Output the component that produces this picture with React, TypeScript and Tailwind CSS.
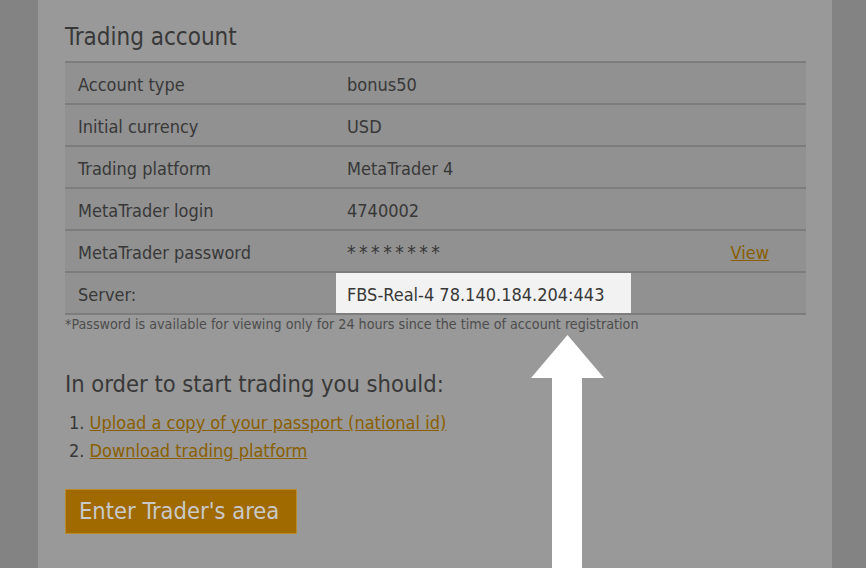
const rows = [
  { label: 'Account type', value: 'bonus50' },
  { label: 'Initial currency', value: 'USD' },
  { label: 'Trading platform', value: 'MetaTrader 4' },
  { label: 'MetaTrader login', value: '4740002' },
  { label: 'MetaTrader password', value: '********', link: 'View', stars: true },
];

export default function App() {
  return (
    <div
      className="relative flex h-[568px] w-[866px] overflow-hidden bg-[#838383] text-[#383838]"
      style={{ fontFamily: '"DejaVu Sans Condensed", "DejaVu Sans", sans-serif' }}
    >
      <div className="w-[38px] shrink-0" />
      <div className="flex-1 bg-[#999999] pl-[27px] pr-[26px] pt-[22px]">
        <h2 className="text-[24px] leading-[30px]">Trading account</h2>
        <div className="mt-[9px] border-t-2 border-[#7d7d7d]">
          {rows.map((r) => (
            <div key={r.label} className="flex h-[42px] items-center border-b-2 border-[#7d7d7d] bg-[#919191] pt-[2px] text-[18px]">
              <div className="w-[271px] pl-[13px]">{r.label}</div>
              <div className={r.stars ? 'flex-1 pl-[11px] text-[19px] tracking-[3.5px]' : 'flex-1 pl-[11px]'}>{r.value}</div>
              {r.link && <a className="mr-[37px] text-[#8a5f00] underline">{r.link}</a>}
            </div>
          ))}
          <div className="flex h-[42px] items-stretch border-b-2 border-[#7d7d7d] bg-[#919191] text-[18px]">
            <div className="flex w-[271px] items-center pl-[13px] pt-[2px]">Server:</div>
            <div className="flex w-[295px] items-center bg-[#f2f2f2] pl-[11px] pt-[2px]">FBS-Real-4 78.140.184.204:443</div>
          </div>
        </div>
        <p className="text-[14.2px] leading-[18px] text-[#4d4d4d]">
          *Password is available for viewing only for 24 hours since the time of account registration
        </p>
        <h3 className="mt-[36px] text-[23.5px] leading-[30px]">In order to start trading you should:</h3>
        <ol className="mt-[11px] flex flex-col gap-[2px] pl-[4px] text-[18px] leading-[26px]">
          <li>
            1. <a className="text-[#8a5f00] underline">Upload a copy of your passport (national id)</a>
          </li>
          <li>
            2. <a className="text-[#8a5f00] underline">Download trading platform</a>
          </li>
        </ol>
        <button className="mt-[25px] h-[45px] w-[232px] border border-[#b98a2e] bg-[#a06a00] px-[13px] text-left text-[23.5px] text-[#c9c9c9]">
          Enter Trader's area
        </button>
      </div>
      <div className="w-[34px] shrink-0" />

      {/* arrow overlay */}
      <svg className="absolute left-[531px] top-[335px]" width="73" height="233" viewBox="0 0 73 233">
        <polygon points="36.5,0 73,43 0,43" fill="#fff" />
        <rect x="21" y="43" width="30" height="190" fill="#fff" />
      </svg>
    </div>
  );
}
